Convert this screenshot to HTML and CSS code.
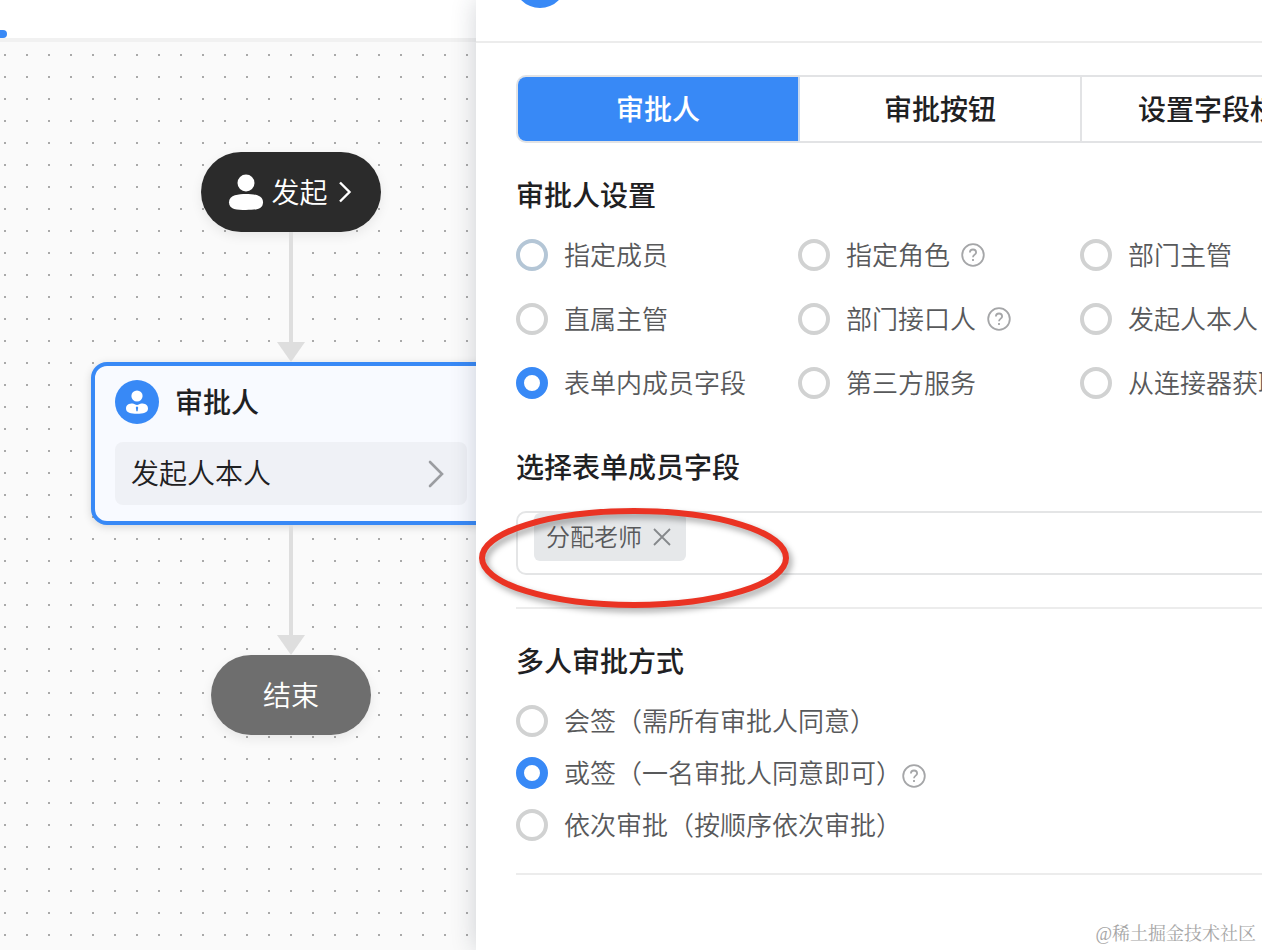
FILE: index.html
```html
<!DOCTYPE html>
<html lang="zh-CN">
<head>
    <meta charset="UTF-8">
    <meta name="viewport" content="width=device-width, initial-scale=1.0">
    <title>审批流程设计</title>
    <link rel="stylesheet" href="styles.css">
</head>
<body>
    <div class="app">
        <main class="designer">
            <div class="topbar"><span class="topbar-active"></span></div>
            <div class="canvas">
                <div class="flow">
                    <button class="pill pill-start" type="button">
                        <svg width="36" height="36" viewBox="0 0 36 36" fill="#fff">
                            <circle cx="18" cy="9" r="8.5"/>
                            <path d="M18 20c7 0 17 .8 17 8.2S27 36 18 36 1 35.600 1 28.200 11 20 18 20z"/>
                        </svg>
                        <span>发起</span>
                        <svg class="pill-arrow" width="14" height="22" viewBox="0 0 14 22" fill="none" stroke="#fff" stroke-width="2.400">
                            <path d="M2 1.500l9.500 9.500L2 20.500"/>
                        </svg>
                    </button>

                    <div class="connector"></div>

                    <section class="card">
                        <div class="card-head">
                            <svg width="44" height="44" viewBox="0 0 44 44">
                                <circle cx="22" cy="22" r="22" fill="#3889f6"/>
                                <circle cx="22" cy="16" r="5.600" fill="#fff"/>
                                <path d="M17.500 23.600c1.600 0 3 1.400 4.500 1.400s2.900-1.400 4.500-1.400c3.300 0 6.500 1.300 6.500 4.900 0 4.300-5 5.200-11 5.200s-11-.9-11-5.200c0-3.600 3.200-4.900 6.500-4.900z" fill="#fff"/>
                                <path d="M22 26.200l1.200 1.300-.6 3.700h-1.200l-.6-3.700z" fill="#3889f6"/>
                            </svg>
                            <h3>审批人</h3>
                        </div>
                        <button class="card-row" type="button">
                            <span>发起人本人</span>
                            <svg width="18" height="28" viewBox="0 0 18 28" fill="none" stroke="#9b9da1" stroke-width="2.600" stroke-linecap="round">
                                <path d="M3 2l12 12L3 26"/>
                            </svg>
                        </button>
                    </section>

                    <div class="connector"></div>

                    <div class="pill pill-end"><span>结束</span></div>
                </div>
            </div>
        </main>

        <aside class="panel">
            <div class="panel-head"><span class="panel-icon"></span></div>
            <div class="panel-body">
                <div class="tabs">
                    <button class="tab active" type="button">审批人</button>
                    <button class="tab" type="button">审批按钮</button>
                    <button class="tab" type="button">设置字段权限</button>
                </div>

                <h2>审批人设置</h2>
                <div class="options">
                    <label class="option"><input class="hovered" type="radio" name="approver"><span>指定成员</span></label>
                    <label class="option"><input type="radio" name="approver"><span>指定角色</span>
                        <svg class="help" viewBox="0 0 24 24"><circle cx="12" cy="12" r="10.800"/><path d="M8.900 9.600C8.900 7.700 10.200 6.500 12 6.500s3.100 1.200 3.100 2.900c0 2.200-3.100 2.400-3.100 4.900"/><path d="M12 16v2"/></svg>
                    </label>
                    <label class="option"><input type="radio" name="approver"><span>部门主管</span></label>
                    <label class="option"><input type="radio" name="approver"><span>直属主管</span></label>
                    <label class="option"><input type="radio" name="approver"><span>部门接口人</span>
                        <svg class="help" viewBox="0 0 24 24"><circle cx="12" cy="12" r="10.800"/><path d="M8.900 9.600C8.900 7.700 10.200 6.500 12 6.500s3.100 1.200 3.100 2.900c0 2.200-3.100 2.400-3.100 4.900"/><path d="M12 16v2"/></svg>
                    </label>
                    <label class="option"><input type="radio" name="approver"><span>发起人本人</span></label>
                    <label class="option"><input type="radio" name="approver" checked><span>表单内成员字段</span></label>
                    <label class="option"><input type="radio" name="approver"><span>第三方服务</span></label>
                    <label class="option"><input type="radio" name="approver"><span>从连接器获取</span></label>
                </div>

                <h2><label for="memberField">选择表单成员字段</label></h2>
                <div class="field">
                    <div class="select-box">
                        <span class="tag"><span>分配老师</span>
                            <button type="button" aria-label="移除">
                                <svg width="18" height="18" viewBox="0 0 18 18" fill="none" stroke="#85888b" stroke-width="1.800"><path d="M1 1l16 16M17 1L1 17"/></svg>
                            </button>
                        </span>
                        <input type="text" id="memberField">
                    </div>
                    <svg class="mark" width="312" height="102" viewBox="0 0 312 102" fill="none" stroke="#ea3323" stroke-width="6">
                        <ellipse cx="156" cy="51" rx="152" ry="47"/>
                    </svg>
                </div>

                <h2>多人审批方式</h2>
                <div class="modes">
                    <label class="option"><input type="radio" name="mode"><span>会签（需所有审批人同意）</span></label>
                    <label class="option"><input type="radio" name="mode" checked><span>或签（一名审批人同意即可）</span>
                        <svg class="help" viewBox="0 0 24 24"><circle cx="12" cy="12" r="10.800"/><path d="M8.900 9.600C8.900 7.700 10.200 6.500 12 6.500s3.100 1.200 3.100 2.900c0 2.200-3.100 2.400-3.100 4.900"/><path d="M12 16v2"/></svg>
                    </label>
                    <label class="option"><input type="radio" name="mode"><span>依次审批（按顺序依次审批）</span></label>
                </div>
            </div>
            <div class="watermark">@稀土掘金技术社区</div>
        </aside>
    </div>
</body>
</html>
```

FILE: styles.css
```css
* {
    box-sizing: border-box;
}
body {
    margin: 0;
    font-family: "Noto Sans CJK SC", sans-serif;
    color: #1f2123;
    background-color: white;
}
button {
    font: inherit;
    color: inherit;
    border: none;
    padding: 0;
    cursor: pointer;
}
h2, h3 {
    margin: 0;
    font-size: 28px;
    font-weight: 500;
    line-height: 38px;
}
svg {
    display: block;
    flex: none;
}
.app {
    display: grid;
    grid-template-columns: 476px minmax(0, 1fr);
    min-height: 100vh;
    overflow: hidden;
}

/* flow designer */
.designer {
    display: flex;
    flex-direction: column;
    min-width: 0;
    overflow: hidden;
}
.topbar {
    display: flex;
    align-items: flex-end;
    height: 42px;
    border-bottom: 4px solid #f1f1f1;
}
.topbar-active {
    width: 7px;
    height: 8px;
    border-radius: 0 4px 4px 0;
    background-color: #3889f6;
}
.canvas {
    flex: 1;
    padding: 110px 0 0 91px;
    background-color: #fafafa;
    background-image: conic-gradient(from 90deg at 20px 20px, #a9a9a9 90deg, transparent 0);
    background-size: 22px 22px;
    background-position: 6px 14px;
}
.flow {
    display: flex;
    flex-direction: column;
    align-items: center;
    width: 400px;
}
.pill {
    display: flex;
    align-items: center;
    justify-content: center;
    height: 80px;
    border-radius: 40px;
    font-size: 28px;
    font-weight: 350;
    color: white;
    box-shadow: 0 4px 12px rgba(0,0,0,0.08);
}
.pill span,
.card-row span,
.card-head h3 {
    padding-bottom: 2px;
}
.pill-start {
    width: 180px;
    gap: 7px;
    padding-right: 2px;
    background-color: #2b2b2b;
}
.pill-arrow {
    margin-left: 3px;
}
.pill-end {
    width: 160px;
    background-color: #6e6e6e;
}
.connector {
    display: flex;
    flex-direction: column;
    align-items: center;
    height: 130px;
}
.connector::before {
    content: "";
    flex: 1;
    width: 4px;
    background-color: #dedede;
}
.connector::after {
    content: "";
    width: 28px;
    height: 20px;
    background-color: #dedede;
    clip-path: polygon(0 0, 100% 0, 50% 100%);
}
.card {
    width: 100%;
    padding: 14px 20px 16px;
    border: 4px solid #3889f6;
    border-radius: 16px;
    background-color: #f8faff;
    box-shadow: 0 2px 8px rgba(0,0,0,0.15);
}
.card-head {
    display: flex;
    align-items: center;
    gap: 16px;
    margin-bottom: 18px;
}
.card-row {
    display: flex;
    align-items: center;
    justify-content: space-between;
    width: 100%;
    height: 63px;
    padding: 0 22px 0 16px;
    border-radius: 8px;
    font-size: 28px;
    font-weight: 350;
    background-color: #eff1f6;
}
.card-row span {
    padding-bottom: 3px;
}

/* settings panel */
.panel {
    position: relative;
    min-width: 0;
    background-color: white;
    box-shadow: 0 0 24px rgba(30,40,60,0.2);
}
.panel-head {
    display: flex;
    align-items: flex-end;
    height: 43px;
    padding: 0 38px 33px;
    border-bottom: 2px solid #ececec;
}
.panel-icon {
    flex: none;
    width: 52px;
    height: 52px;
    border-radius: 50%;
    background-color: #3889f6;
}
.panel-body {
    padding: 32px 0 0 40px;
    overflow: hidden;
}
.tabs {
    display: flex;
    width: max-content;
    margin-bottom: 32px;
    border: 2px solid #e2e3e5;
    border-radius: 10px;
    overflow: hidden;
}
.tab {
    width: 282px;
    height: 64px;
    padding-bottom: 2px;
    border-right: 2px solid #e2e3e5;
    font-size: 28px;
    font-weight: 500;
    background-color: white;
}
.tab.active {
    color: white;
    border-right-color: #c9d9ee;
    background-color: #3889f6;
}
.options {
    display: grid;
    grid-template-columns: repeat(3, 282px);
    gap: 24px 0;
    margin: 22px 0 44px;
}
.option {
    display: flex;
    align-items: center;
    height: 40px;
    font-size: 26px;
    font-weight: 350;
    color: #58595b;
    white-space: nowrap;
}
.option span {
    padding-bottom: 3px;
}
.option input {
    appearance: none;
    flex: none;
    width: 32px;
    height: 32px;
    margin: 0 16px 0 0;
    border: 4px solid #d1d2d2;
    border-radius: 50%;
    background-color: white;
}
.option input.hovered {
    border-color: #b4c6d6;
}
.option input:checked {
    border: 8px solid #3889f6;
}
.help {
    width: 24px;
    height: 24px;
    margin-left: 11px;
    fill: none;
    stroke: #a5a6a8;
    stroke-width: 1.8;
}
.modes .help {
    margin: 6px 0 0;
}
.field {
    position: relative;
    margin: 26px 0 32px;
    padding-bottom: 32px;
    border-bottom: 2px solid #ececec;
}
.select-box {
    display: flex;
    align-items: flex-start;
    width: 846px;
    height: 64px;
    padding: 0 16px;
    border: 2px solid #e4e5e6;
    border-radius: 10px;
}
.select-box input {
    flex: 1;
    height: 60px;
    border: none;
    outline: none;
    background: none;
    font-size: 24px;
}
.tag {
    display: flex;
    align-items: center;
    gap: 11px;
    height: 48px;
    padding: 0 15px 0 12px;
    border-radius: 6px;
    font-size: 24px;
    font-weight: 350;
    color: #58595b;
    background-color: #e6e8ea;
}
.tag span {
    padding-bottom: 3px;
}
.tag button {
    background: none;
}
.mark {
    position: absolute;
    top: -4px;
    left: -38px;
    overflow: visible;
    filter: drop-shadow(3px 4px 3px rgba(0,0,0,0.35));
    pointer-events: none;
}
.modes {
    display: flex;
    flex-direction: column;
    gap: 12px;
    margin-top: 22px;
    padding-bottom: 28px;
    border-bottom: 2px solid #ececec;
}
.watermark {
    position: absolute;
    right: 6px;
    bottom: 3px;
    font-family: "Liberation Serif", "Noto Serif CJK SC", "Noto Sans CJK SC", serif;
    font-size: 18px;
    line-height: 26px;
    color: #a6a6a6;
}
```
